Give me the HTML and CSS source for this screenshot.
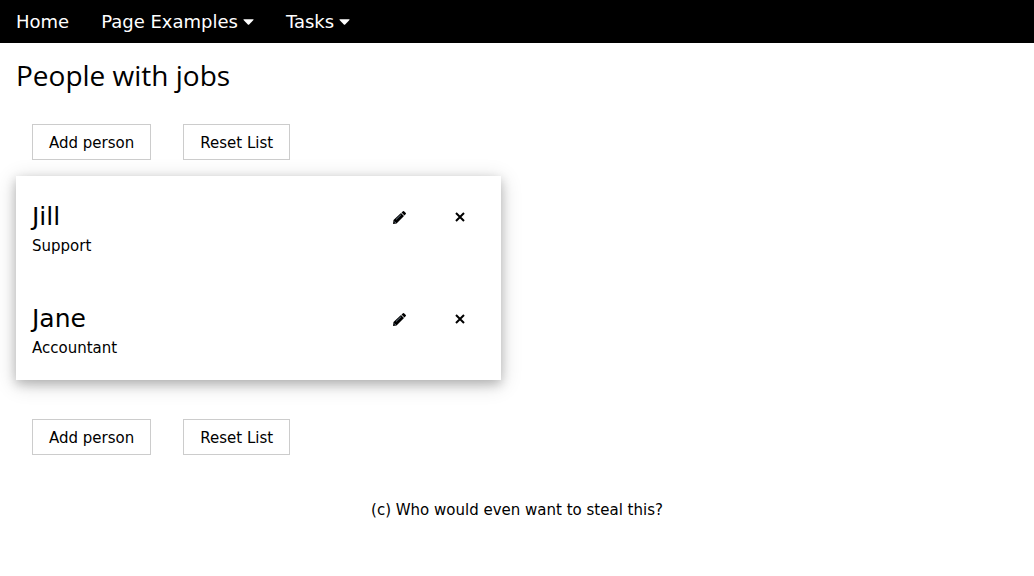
FILE: index.html
```
<!DOCTYPE html>
<html lang="en">
<head>
<meta charset="utf-8">
<title>People with jobs</title>
<link rel="stylesheet" href="styles.css">
</head>
<body>
<nav class="bar">
  <a class="bar-item" href="#">Home</a>
  <button class="bar-item" type="button">Page Examples <svg class="caret" viewBox="0 0 12 6" aria-hidden="true"><path d="M1 0h10q1 0 .4.9L6.700 5.600q-.7.600-1.400 0L.6.900Q0 0 1 0z"/></svg></button>
  <button class="bar-item" type="button">Tasks <svg class="caret" viewBox="0 0 12 6" aria-hidden="true"><path d="M1 0h10q1 0 .4.9L6.700 5.600q-.7.600-1.400 0L.6.900Q0 0 1 0z"/></svg></button>
</nav>
<main class="content">
  <h1 class="title">People with jobs</h1>
  <div class="actions">
    <button class="button" type="button">Add person</button>
    <button class="button" type="button">Reset List</button>
  </div>
  <ul class="card">
    <li class="person">
      <div class="info"><h2 class="name">Jill</h2><p class="job">Support</p></div>
      <button class="icon-button" type="button" aria-label="Edit Jill"><svg class="pencil" viewBox="0 0 13 13" aria-hidden="true"><path d="M0 13L.5 9 8 2l3 3-7.500 7.500zM8.500 1.500L10 .2q.5-.4 1 0l1.800 1.800q.4.500 0 1l-1.300 1.500z"/><path class="shine" d="M3 8.500L8 3.700M1.300 10.500l1.500 1.500"/></svg></button>
      <button class="icon-button" type="button" aria-label="Remove Jill"><svg class="cross" viewBox="0 0 10 10" aria-hidden="true"><path d="M1 1l8 8M9 1l-8 8"/></svg></button>
    </li>
    <li class="person">
      <div class="info"><h2 class="name">Jane</h2><p class="job">Accountant</p></div>
      <button class="icon-button" type="button" aria-label="Edit Jane"><svg class="pencil" viewBox="0 0 13 13" aria-hidden="true"><path d="M0 13L.5 9 8 2l3 3-7.500 7.500zM8.500 1.500L10 .2q.5-.4 1 0l1.800 1.800q.4.500 0 1l-1.300 1.500z"/><path class="shine" d="M3 8.500L8 3.700M1.300 10.500l1.500 1.500"/></svg></button>
      <button class="icon-button" type="button" aria-label="Remove Jane"><svg class="cross" viewBox="0 0 10 10" aria-hidden="true"><path d="M1 1l8 8M9 1l-8 8"/></svg></button>
    </li>
  </ul>
  <div class="actions lower">
    <button class="button" type="button">Add person</button>
    <button class="button" type="button">Reset List</button>
  </div>
</main>
<footer class="footer">(c) Who would even want to steal this?</footer>
</body>
</html>
```
FILE: styles.css
```
* { box-sizing: border-box; }
body { margin: 0; background: #fff; color: #000; font: 15px/22px Verdana, "DejaVu Sans", sans-serif; }
button { font: inherit; color: inherit; cursor: pointer; }
.bar { display: flex; background: #000; color: #fff; font-size: 18px; line-height: 27px; }
.bar-item { display: flex; align-items: center; gap: 5px; padding: 8px 16px; border: 0; background: none; color: inherit; text-decoration: none; }
.caret { width: 11px; height: 6px; fill: currentColor; }
.content { padding: 0 16px; }
.title { margin: 10px 0; font: 400 28px/45px "Segoe UI", "Open Sans", sans-serif; }
.actions { display: flex; gap: 32px; padding: 16px; }
.button { padding: 7px 16px 5px; border: 1px solid #ccc; background: #fff; }
.card { width: 48.4%; margin: 0; padding: 0; list-style: none; box-shadow: 0 4px 10px rgba(0,0,0,.2), 0 4px 20px rgba(0,0,0,.19); }
.person { display: flex; align-items: flex-start; padding: 23px 10px 21px 16px; }
.info { flex: 1; }
.name { margin: 0; font-size: 25px; font-weight: 400; line-height: 36px; }
.job { margin: 0; }
.icon-button { display: grid; place-items: center; width: 61px; height: 36px; padding: 0; border: 0; background: none; }
.pencil { width: 13px; height: 13px; }
.pencil .shine { fill: none; stroke: #678; stroke-width: 1; }
.cross { width: 10px; height: 10px; fill: none; stroke: #000; stroke-width: 2; }
.lower { margin-top: 23px; }
.footer { padding: 28px 16px; text-align: center; }
```
